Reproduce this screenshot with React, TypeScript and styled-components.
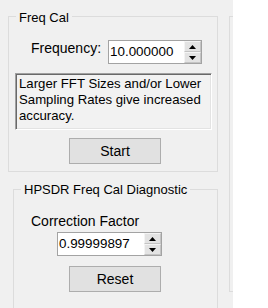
import React from 'react';
import styled, { createGlobalStyle } from 'styled-components';

const Global = createGlobalStyle`
  html, body { margin: 0; padding: 0; background: #ffffff; }
  body { font-family: "Liberation Sans", Arial, sans-serif; color: #000; }
`;

const Screen = styled.div`
  width: 268px;
  height: 308px;
  display: flex;
  background: #ffffff;
  overflow: hidden;
`;

const Panel = styled.div`
  width: 233px;
  height: 100%;
  flex-shrink: 0;
  display: flex;
  align-items: flex-start;
  background: #f0f0f0;
  overflow: hidden;
`;

const Column = styled.div`
  width: 218px;
  flex-shrink: 0;
  display: flex;
  flex-direction: column;
`;

const GroupBox = styled.div<{ $left: number; $top: number; $width: number; $height: number }>`
  position: relative;
  box-sizing: border-box;
  flex-shrink: 0;
  display: flex;
  flex-direction: column;
  align-items: flex-start;
  margin-left: ${(p) => p.$left}px;
  margin-top: ${(p) => p.$top}px;
  width: ${(p) => p.$width}px;
  height: ${(p) => p.$height}px;
  border: 1px solid #dcdcdc;
`;

const Legend = styled.span<{ $top: number }>`
  position: absolute;
  top: ${(p) => p.$top}px;
  left: 7px;
  padding: 0 3px;
  background: #f0f0f0;
  font-size: 13px;
  line-height: 15px;
  white-space: nowrap;
`;

const FreqRow = styled.div`
  display: flex;
  align-items: flex-start;
  gap: 7px;
  margin: 23px 0 0 22px;
`;

const FieldLabel = styled.span`
  font-size: 14px;
  line-height: 16px;
  white-space: nowrap;
`;

const CorrLabel = styled(FieldLabel)`
  margin: 23px 0 0 17px;
`;

const NumericBox = styled.div<{ $width: number; $left?: number; $top?: number }>`
  box-sizing: border-box;
  display: flex;
  width: ${(p) => p.$width}px;
  height: 24px;
  margin-left: ${(p) => p.$left ?? 0}px;
  margin-top: ${(p) => p.$top ?? 0}px;
  border: 1px solid #a3a3a3;
  background: #ffffff;
`;

const NumericValue = styled.span`
  flex: 1;
  padding-left: 1px;
  font-size: 13.4px;
  line-height: 22px;
  white-space: nowrap;
`;

const Spin = styled.div`
  width: 17px;
  display: flex;
  flex-direction: column;
`;

const SpinButton = styled.div`
  box-sizing: border-box;
  flex: 1;
  display: flex;
  align-items: center;
  justify-content: center;
  background: #e3e3e3;
  border: 1px solid #c4c4c4;
  border-top-color: #f4f4f4;
  border-left-color: #f4f4f4;
`;

const Arrow = ({ up }: { up?: boolean }) => (
  <svg width="7" height="4" viewBox="0 0 7 4">
    <path d={up ? 'M0 4 L3.5 0 L7 4 Z' : 'M0 0 L7 0 L3.5 4 Z'} fill="#000" />
  </svg>
);

const Numeric = ({ value, width, left, top }: { value: string; width: number; left?: number; top?: number }) => (
  <NumericBox $width={width} $left={left} $top={top}>
    <NumericValue>{value}</NumericValue>
    <Spin>
      <SpinButton>
        <Arrow up />
      </SpinButton>
      <SpinButton>
        <Arrow />
      </SpinButton>
    </Spin>
  </NumericBox>
);

const InfoText = styled.div`
  box-sizing: border-box;
  width: 197px;
  height: 57px;
  margin: 9px 0 0 6px;
  padding: 2px 0 0 3px;
  border: 1px solid;
  border-color: #a0a0a0 #ffffff #ffffff #a0a0a0;
  box-shadow: inset 1px 1px 0 #696969, inset -1px -1px 0 #e3e3e3;
  background: #f2f2f2;
  font-size: 13.2px;
  line-height: 16px;
`;

const Button = styled.div<{ $top: number; $left: number }>`
  box-sizing: border-box;
  width: 92px;
  height: 26px;
  margin: ${(p) => p.$top}px 0 0 ${(p) => p.$left}px;
  display: flex;
  align-items: center;
  justify-content: center;
  border: 1px solid #adadad;
  background: #e1e1e1;
  font-size: 14px;
  line-height: 16px;
`;

export default function App() {
  return (
    <Screen>
      <Global />
      <Panel>
        <Column>
          <GroupBox $left={8} $top={16} $width={210} $height={156}>
            <Legend $top={-7}>Freq Cal</Legend>
            <FreqRow>
              <FieldLabel>Frequency:</FieldLabel>
              <Numeric value="10.000000" width={94} />
            </FreqRow>
            <InfoText>
              Larger FFT Sizes and/or Lower Sampling Rates give increased accuracy.
            </InfoText>
            <Button $top={8} $left={60}>Start</Button>
          </GroupBox>
          <GroupBox $left={13} $top={17} $width={205} $height={130}>
            <Legend $top={-8}>HPSDR Freq Cal Diagnostic</Legend>
            <CorrLabel>Correction Factor</CorrLabel>
            <Numeric value="0.99999897" width={105} left={43} top={3} />
            <Button $top={10} $left={55}>Reset</Button>
          </GroupBox>
        </Column>
        <GroupBox $left={11} $top={16} $width={40} $height={276} />
      </Panel>
    </Screen>
  );
}
